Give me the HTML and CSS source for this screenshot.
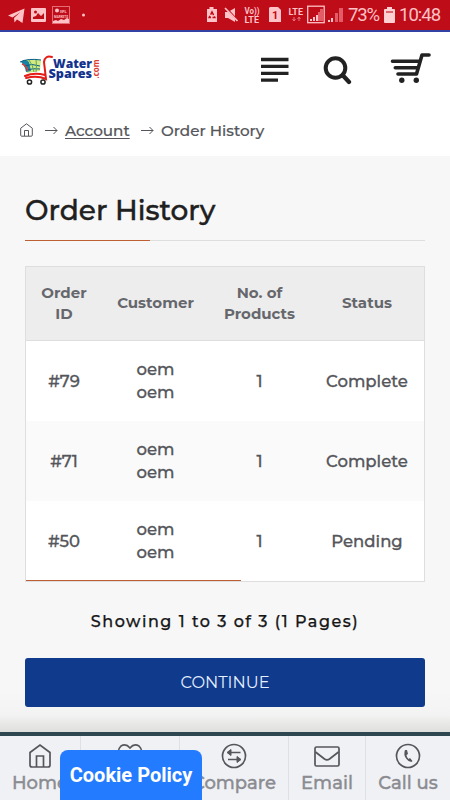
FILE: index.html
```html
<!DOCTYPE html>
<html lang="en">
<head>
<meta charset="utf-8">
<title>Order History</title>
<link rel="stylesheet" href="styles.css">
</head>
<body>
<div class="statusbar">
  <svg class="notifications" width="90" height="30" viewBox="0 0 90 30" fill="#ffc2c6">
    <path d="M8 15.500 24.500 8.500 22.500 23 17 19.500 14.500 22.500 14 18 20.500 12 12.500 17.500Z"/>
    <path fill-rule="evenodd" d="M32 8h13q1 0 1 1v12q0 1-1 1H32q-1 0-1-1V9q0-1 1-1Zm1 11h11v-6l-3 3-3-3-2 3-3 1Z"/><circle cx="35.500" cy="12" r="1.500" fill="#be0c18"/>
    <rect x="52.500" y="6.500" width="17" height="17" fill="none" stroke="#e56b75"/>
    <path d="M53 23v-2l3-1 2 1 3-2 3 1 3-2 2 1v4Z"/>
    <circle cx="57" cy="10.500" r="2"/><text x="60" y="12.500" class="micro">IIFL</text><text x="54" y="17.500" textLength="14" lengthAdjust="spacingAndGlyphs" class="micro">MARKETS</text>
    <circle cx="83.500" cy="15" r="1.500"/>
  </svg>
  <svg class="signals" width="140" height="30" viewBox="205 0 140 30" fill="#ffc2c6">
    <path d="M209.500 7h4v2h3.500v13h-10V9h2.500Z"/><path d="m212 12 2.800 5.500h-5.600Z" fill="none" stroke="#be0c18" stroke-width="1.500" stroke-dasharray="3.500 1.500"/>
    <path d="M225 12h3l7-4v14l-7-4h-3Z"/><path d="m226 8 12 13" stroke="#be0c18" stroke-width="2"/><path d="m225 8 12.500 13" stroke="#ffc2c6" stroke-width="1.700"/>
    <text x="244.500" y="14" textLength="15" lengthAdjust="spacingAndGlyphs" class="tiny">Vo))</text><text x="244.500" y="22.500" class="tiny">LTE</text>
    <path d="M270 7h8l3 3v12h-12V8Z"/><text x="272" y="19" class="sim">1</text>
    <text x="288.500" y="14.500" class="tiny">LTE</text><path d="M294 17v4m-1.500-2 1.500 2 1.500-2M299 21v-4m-1.500 2 1.500-2 1.500 2" fill="none" stroke="#e87580"/>
    <rect x="307.700" y="6.200" width="16.500" height="16.500" fill="none" stroke="#ffc2c6" stroke-width="1.300"/>
    <path d="M310 19h2v2h-2Zm3-2h2v4h-2Zm3-2h2v6h-2Z"/><path d="M318 12h2v9h-2Zm2-3h3v12h-3Z" fill="#e35b67"/>
    <path d="M328 20h2v2h-2Zm3-2h2v4h-2Z"/><path d="M335 13h3v9h-3Zm4-5h4v14h-4Z" fill="#e35b67"/>
  </svg>
  <span class="percent">73%</span>
  <svg class="battery" width="11" height="16" viewBox="0 0 11 16"><path d="M3 0h5v2h2q1 0 1 1v12q0 1-1 1H1q-1 0-1-1V3q0-1 1-1h2Z" fill="#ffd0d2"/><path d="M2 4h7v2H2Z" fill="#dc6570"/></svg>
  <span class="clock">10:48</span>
</div>
<header class="header">
  <svg class="logo" width="84" height="34" viewBox="18 52 84 34">
    <path d="M22 61q8-3 19-1l-1 11-13 2q-1-7-5-12Z" fill="#d3e982"/>
    <path d="M21 62q4-4 8 0l2 9-5 1q-1-6-5-10Z" fill="#1784a4"/>
    <path d="M20 62q8-4 21-2M24 66q8-3 16 0M26 70q8-2 14-1" fill="none" stroke="#075b86"/><path d="M29 60q4 5 5 12M36 60q1 6 0 12" fill="none" stroke="#58a860"/>
    <path d="M22 64q4 1 6 7" fill="none" stroke="#de3d37" stroke-width="1.500"/>
    <path d="M52 57q-7-2-8 5l2 17q-9-4-20-1M25 76q9-4 20-1" fill="none" stroke="#e51b16" stroke-width="2" stroke-linecap="round"/>
    <g fill="#fff" stroke="#222" stroke-width="1.500"><circle cx="29.500" cy="82" r="2.100"/><circle cx="43" cy="82" r="2.100"/></g>
    <text x="53" y="67.500" textLength="39" lengthAdjust="spacingAndGlyphs" class="brand">Water</text>
    <text x="48.500" y="77.500" textLength="43.500" lengthAdjust="spacingAndGlyphs" class="brand">Spares</text>
    <text transform="translate(98.500 78.500) rotate(-90)" textLength="19" lengthAdjust="spacingAndGlyphs" class="domain">.com</text>
  </svg>
  <svg class="menu" width="28" height="26" viewBox="0 0 28 26"><path d="M0 2.500h27.500M0 9.400h27.500M0 16.300h27.500M0 23.200h17" stroke="#222" stroke-width="3.300"/></svg>
  <svg class="search" width="30" height="30" viewBox="0 0 30 30" fill="none" stroke="#222"><circle cx="12.500" cy="13" r="9.800" stroke-width="4"/><path d="m20 20.500 6 6.500" stroke-width="4.300" stroke-linecap="round"/></svg>
  <svg class="cart" width="42" height="32" viewBox="0 0 42 32" fill="none" stroke="#222" stroke-width="3.600" stroke-linecap="round" stroke-linejoin="round"><path d="M2.500 9.200H29M5.300 15.700H27M8 22h18.500L32 3h7"/><g fill="#222" stroke="none"><circle cx="11.800" cy="28.300" r="2.700"/><circle cx="26.300" cy="28.300" r="2.700"/></g></svg>
</header>
<nav class="breadcrumb">
  <svg width="13" height="14" viewBox="0 0 13 14" fill="none" stroke="#55555b"><path d="M.7 5.200 6.500.8l5.800 4.400v7q0 1-1 1H1.700q-1 0-1-1Z"/><path d="M4.500 13V7.500h4V13"/></svg>
  <svg class="arrow first" width="13" height="9" viewBox="0 0 13 9"><path d="M0 4.500h12M8.500 1 12 4.500 8.500 8" fill="none" stroke="#55555b"/></svg>
  <a class="account">Account</a>
  <svg class="arrow second" width="13" height="9" viewBox="0 0 13 9"><path d="M0 4.500h12M8.500 1 12 4.500 8.500 8" fill="none" stroke="#55555b"/></svg>
  <span class="current">Order History</span>
</nav>
<main class="content">
  <h1 class="title"><span>Order History</span></h1>
  <div class="table">
    <div class="row head"><div>Order<br>ID</div><div>Customer</div><div>No. of<br>Products</div><div>Status</div></div>
    <div class="row"><div>#79</div><div class="name">oem<br>oem</div><div>1</div><div>Complete</div></div>
    <div class="row alt"><div>#71</div><div class="name">oem<br>oem</div><div>1</div><div>Complete</div></div>
    <div class="row"><div>#50</div><div class="name">oem<br>oem</div><div>1</div><div>Pending</div></div>
    <div class="scrollbar"></div>
  </div>
  <p class="results">Showing 1 to 3 of 3 (1 Pages)</p>
  <a class="continue">CONTINUE</a>
</main>
<footer class="bottombar">
  <a class="item"><svg width="24" height="26" viewBox="0 0 24 26"><path d="M2 9.500 12 2l10 7.500V22q0 2-2 2H4q-2 0-2-2ZM8.500 24V13h7v11"/></svg><span>Home</span></a>
  <a class="item"><svg width="26" height="26" viewBox="0 0 26 26"><path d="M13 5q-4-5-9-2-5 5 0 10l9 10 9-10q5-5 0-10-5-3-9 2Z"/></svg></a>
  <a class="item"><svg width="26" height="26" viewBox="0 0 26 26"><circle cx="13" cy="13" r="11.500"/><path d="M19.500 9.500H7M19 16.500H7"/><path d="m10 6.500-4 3 4 3Zm6 7 4 3-4 3Z" fill="#55565c" stroke-width="1"/></svg><span>Compare</span></a>
  <a class="item"><svg width="26" height="26" viewBox="0 0 26 26"><rect x="1" y="4" width="24" height="19" rx="1.500"/><path d="m1.500 9 9 7q2.500 1.800 5 0l9-7"/></svg><span>Email</span></a>
  <a class="item"><svg width="26" height="26" viewBox="0 0 26 26"><circle cx="13" cy="13" r="11.500"/><path d="M10 7q-2 5 1.500 9 2 3 5 3l1-1-2.500-3-1.500 1q-2-2-2-4l1.500-1L12 7Z" fill="#55565c" stroke="none"/></svg><span>Call us</span></a>
</footer>
<div class="cookie"><span>Cookie Policy</span></div>
</body>
</html>
```
FILE: styles.css
```css
* { box-sizing: border-box; }
body {
  margin: 0; width: 450px; height: 800px; overflow: hidden; position: relative;
  display: flex; flex-direction: column; background: #f7f7f7; color: #55565b;
  font-family: Montserrat, Inter, sans-serif; font-weight: 500;
}
svg { display: block; flex: none; }
.statusbar {
  height: 32px; flex: none; display: flex; background: #be0c18; border-bottom: 2px solid #3142a4;
  color: #ffc2c6; font-family: Roboto, sans-serif;
}
.signals { margin-left: 115px; }
.percent, .clock { font-size: 18.500px; font-weight: 400; line-height: 31px; white-space: nowrap; }
.percent { margin-left: 3px; width: 32px; letter-spacing: -1.200px; }
.battery { margin: 7px 0 0 4px; }
.clock { margin-left: 4px; letter-spacing: -1px; }
.micro { font: 700 4px Roboto, sans-serif; }
.tiny { font: 700 9px Roboto, sans-serif; }
.sim { font: 700 11px Roboto, sans-serif; fill: #be0c18; }
.header { height: 74px; flex: none; display: flex; background: #fff; }
.logo { margin: 20px 0 0 18px; }
.brand { font: 800 12px "Open Sans", sans-serif; fill: #13328e; }
.domain { font: 700 9px "Open Sans", sans-serif; fill: #dc3b31; }
.menu { margin: 25px 0 0 159px; }
.search { margin: 23px 0 0 34px; }
.cart { margin: 20px 0 0 37px; }
.breadcrumb { height: 50px; flex: none; display: flex; align-items: center; background: #fff; padding: 0 0 2px 20px; font-size: 15.200px; white-space: nowrap; -webkit-text-stroke: .2px; }
.arrow.first { margin-left: 12px; }
.arrow.second { margin-left: 11px; }
.account { margin-left: 7px; width: 65px; text-decoration: underline; text-underline-offset: 2px; }
.current { margin-left: 7px; }
.content { padding: 0 25px; height: 576px; flex: none; background: linear-gradient(#f7f7f7 93%, #f3f3f3 97%, #dededc); }
.title { margin: 0; height: 85px; padding-top: 37px; font-size: 28px; line-height: 34px; font-weight: 500; color: #202020; border-bottom: 1px solid #dedede; position: relative; -webkit-text-stroke: .4px; }
.title::after { content: ""; position: absolute; left: 0; bottom: -1px; width: 125px; height: 1px; background: #bc6033; }
.table { margin-top: 25px; height: 316px; border: 1px solid #dedede; background: #fff; position: relative; }
.row { display: grid; grid-template-columns: 76px 107px 101px 114px; height: 80px; align-items: center; text-align: center; font-size: 16.500px; line-height: 23px; -webkit-text-stroke: .3px; }
.head { height: 74px; padding-bottom: 2px; background: #ededed; border-bottom: 1px solid #dedede; font-size: 15px; line-height: 21px; font-weight: 700; color: #66676c; -webkit-text-stroke: 0; }
.alt { background: #fafafa; }
.scrollbar { position: absolute; left: 0; bottom: 0; width: 215px; height: 1px; background: #bc6033; }
.results { margin: 28px 0 0; height: 24px; line-height: 24px; font-size: 16px; color: #161616; text-align: center; letter-spacing: 1.500px; white-space: nowrap; -webkit-text-stroke: .25px; }
.continue { margin-top: 24px; height: 49px; padding-bottom: 2px; display: flex; align-items: center; justify-content: center; background: #103a8c; color: #e4efff; border-radius: 3px; font-size: 16.300px; font-weight: 400; }
.bottombar { height: 68px; flex: none; display: grid; grid-template-columns: 81px 99px 109px 77px 84px; background: #f0f1f5; border-top: 4px solid #2e4650; }
.item { display: flex; flex-direction: column; align-items: center; padding-top: 7px; color: #8b8c91; font-size: 18px; line-height: 24px; white-space: nowrap; border-right: 1px solid #dfe0e3; -webkit-text-stroke: .35px; }
.item:last-child { border-right: 0; }
.item svg { fill: none; stroke: #55565c; stroke-width: 1.700; }
.item span { margin-top: 2px; }
.cookie { position: absolute; left: 60px; top: 750px; width: 142px; height: 50px; border-radius: 8px 8px 0 0; background: #237bff; color: #fff; text-align: center; font: 700 20px/50px Roboto, sans-serif; white-space: nowrap; }
```
